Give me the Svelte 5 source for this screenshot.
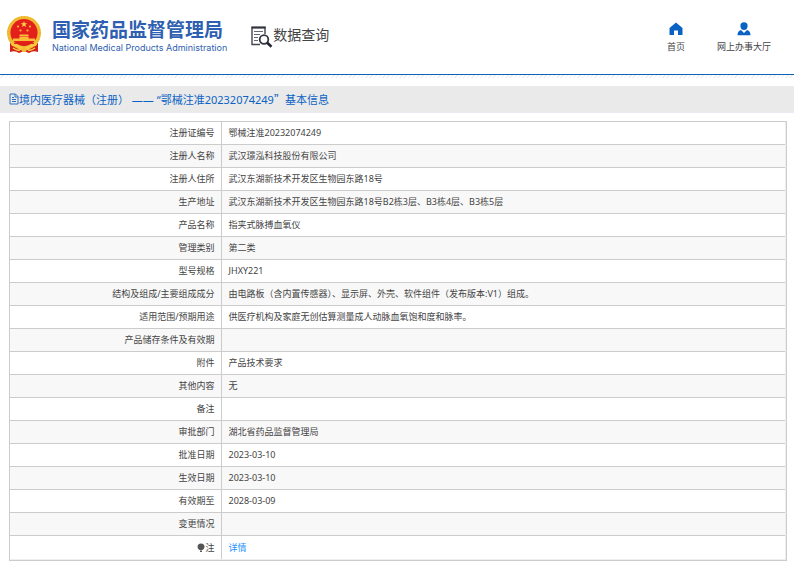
<script>
    const rows = [
        { label: '注册证编号', value: '鄂械注准20232074249' },
        { label: '注册人名称', value: '武汉璟泓科技股份有限公司' },
        { label: '注册人住所', value: '武汉东湖新技术开发区生物园东路18号' },
        { label: '生产地址', value: '武汉东湖新技术开发区生物园东路18号B2栋3层、B3栋4层、B3栋5层' },
        { label: '产品名称', value: '指夹式脉搏血氧仪' },
        { label: '管理类别', value: '第二类' },
        { label: '型号规格', value: 'JHXY221' },
        { label: '结构及组成/主要组成成分', value: '由电路板（含内置传感器）、显示屏、外壳、软件组件（发布版本:V1）组成。' },
        { label: '适用范围/预期用途', value: '供医疗机构及家庭无创估算测量成人动脉血氧饱和度和脉率。' },
        { label: '产品储存条件及有效期', value: '' },
        { label: '附件', value: '产品技术要求' },
        { label: '其他内容', value: '无' },
        { label: '备注', value: '' },
        { label: '审批部门', value: '湖北省药品监督管理局' },
        { label: '批准日期', value: '2023-03-10' },
        { label: '生效日期', value: '2023-03-10' },
        { label: '有效期至', value: '2028-03-09' },
        { label: '变更情况', value: '' }
    ];
</script>

<header>
    <a class="brand" href="#home">
        <svg class="emblem" viewBox="0 0 36 38" aria-hidden="true">
            <path d="M4 26 L4 36 Q9 34 13 37 L18 35 L23 37 Q27 34 32 36 L32 26Z" fill="#d81e18" />
            <circle cx="18" cy="17" r="17" fill="#f2bd32" />
            <circle cx="18" cy="17" r="16" fill="none" stroke="#e2a828" stroke-width="1" stroke-dasharray="1 2" />
            <circle cx="18" cy="16.5" r="13.6" fill="#e3201b" />
            <path d="M18 5 L18.8 7.3 L21.2 7.3 L19.3 8.8 L20 11 L18 9.7 L16 11 L16.7 8.8 L14.8 7.3 L17.2 7.3Z" fill="#fbd544" />
            <g fill="#f9bd38">
                <circle cx="12" cy="10.5" r="1.1" />
                <circle cx="24" cy="10.5" r="1.1" />
                <circle cx="14.5" cy="14.5" r="1.1" />
                <circle cx="21.5" cy="14.5" r="1.1" />
                <path d="M13 20 L14 18.6 H22 L23 20Z M13.5 20.6 H22.5 V22.5 H29 V25 H7 V22.5 H13.5Z" />
            </g>
            <path d="M4 26 Q11 27 14 30 L18 32 L22 30 Q25 27 32 26 L30 30 Q25 30 22 34 H14 Q11 30 6 30Z" fill="#f7c840" />
            <path d="M8 27.5 Q14 26 18 29.5 Q22 26 28 27.5" fill="none" stroke="#d81e18" stroke-width="1.2" />
            <circle cx="18" cy="33.5" r="2.6" fill="#f2bd32" />
            <path d="M7 32 Q11 35 14 34 M29 32 Q25 35 22 34" fill="none" stroke="#f7ce4a" stroke-width="1.4" />
        </svg>
        <span class="names">
            <span class="cn">国家药品监督管理局</span>
            <span class="en">National Medical Products Administration</span>
        </span>
    </a>
    <div class="section">
        <svg viewBox="0 0 22 22" aria-hidden="true">
            <path d="M14 8 V1.5 H1 V18.5 H9" fill="none" stroke="#444552" stroke-width="1.4" />
            <path d="M0.5 1.5 H14.7" stroke="#343542" stroke-width="2" />
            <path d="M3 5.5 H12 M3 8.5 H9 M3 11.5 H7 M3 14.5 H7" stroke="#666772" stroke-width="1.2" />
            <circle cx="13" cy="13.5" r="4.3" fill="#fff" stroke="#343542" stroke-width="1.8" />
            <path d="M16.2 16.8 L20.5 20.8" stroke="#242532" stroke-width="2.6" />
        </svg>
        <span>数据查询</span>
    </div>
    <nav>
        <a href="#index">
            <svg viewBox="0 0 14 14" aria-hidden="true">
                <path d="M7 0.5 L13.5 6 V13 H9 V8.5 H5 V13 H0.5 V6Z" fill="#0a62c4" />
            </svg>
            首页
        </a>
        <a href="#hall">
            <svg viewBox="0 0 14 14" aria-hidden="true">
                <path d="M7 0.3 A3.6 3.6 0 0 1 10.6 4 Q10.4 7.8 7 8 Q3.6 7.8 3.4 4 A3.6 3.6 0 0 1 7 0.3Z M4 8 L7 11 L10 8 Q13.5 9 13.5 13.2 H0.5 Q0.5 9 4 8Z" fill="#0a62c4" />
            </svg>
            网上办事大厅
        </a>
    </nav>
</header>

<main>
    <h1>
        <svg viewBox="0 0 10 12" aria-hidden="true">
            <path d="M1 1 H6.5 L9 3.5 V11 H1Z M6 1 V4 H9 M3 4.5 H5 M3 6.5 H7 M3 8.5 H7" fill="none" stroke="#2c6fc0" />
        </svg>
        <span>境内医疗器械（注册） —— “鄂械注准20232074249<span class="quote">”</span>基本信息</span>
    </h1>

    <div class="table-box">
        <table>
            <tbody>
                {#each rows as row}
                    <tr>
                        <th scope="row">{row.label}</th>
                        <td>{row.value}</td>
                    </tr>
                {/each}
                <tr>
                    <th scope="row">
                        <svg class="bulb" viewBox="0 0 8 10" aria-hidden="true">
                            <path d="M4 0.5 A3.5 3.5 0 0 1 7.5 4 Q7.3 5.8 5.5 7 H2.5 Q0.7 5.8 0.5 4 A3.5 3.5 0 0 1 4 0.5Z M3 7.5 H5 V9 H3Z" fill="#555" />
                        </svg>注
                    </th>
                    <td><a href="#detail">详情</a></td>
                </tr>
            </tbody>
        </table>
    </div>
</main>

<style>
    :global(body) {
        background: #fff;
        color: #444;
        font-family: 'Noto Sans', 'Noto Sans CJK SC', sans-serif;
        font-size: 9px;
    }
    a {
        text-decoration: none;
    }
    header {
        display: flex;
        align-items: center;
        box-sizing: border-box;
        height: 75px;
        padding: 0 23px 4px 6px;
        border-bottom: 1px solid #0a62b8;
    }
    .brand {
        display: flex;
        align-items: center;
        gap: 10px;
        color: #2f5fb0;
    }
    .emblem {
        width: 36px;
        height: 38px;
    }
    .names {
        display: flex;
        flex-direction: column;
        padding-top: 4px;
    }
    .cn {
        font-size: 19px;
        font-weight: 700;
        line-height: 22px;
    }
    .en {
        font-family: Inter, 'Liberation Sans', sans-serif;
        font-size: 9px;
        line-height: 14px;
        white-space: nowrap;
    }
    .section {
        display: flex;
        align-items: flex-start;
        margin-left: 24px;
        padding-top: 4px;
        color: #444;
        font-size: 14px;
        line-height: 18px;
    }
    .section svg {
        width: 22px;
        height: 22px;
    }
    nav {
        display: flex;
        gap: 32px;
        margin-left: auto;
        padding-top: 6px;
    }
    nav a {
        display: flex;
        flex-direction: column;
        align-items: center;
        gap: 4px;
        color: #444;
        line-height: 14px;
    }
    nav svg {
        width: 14px;
        height: 14px;
    }
    /* thin hatched strip under the header line */
    main::before {
        content: '';
        display: block;
        height: 3px;
        margin-bottom: 8px;
        background: repeating-linear-gradient(135deg, #fff 0 2px, #eee 2px 3px);
    }
    h1 {
        display: flex;
        align-items: center;
        box-sizing: border-box;
        height: 27px;
        margin: 0;
        padding: 0 9px;
        border-bottom: 1px solid #e8ebf4;
        background: #eaeaea;
        color: #0a62c4;
        font-size: 11px;
        font-weight: 400;
        line-height: 26px;
    }
    h1 svg {
        width: 10px;
        height: 12px;
    }
    .quote {
        font-family: 'Noto Sans CJK SC', sans-serif;
    }
    .table-box {
        margin: 8px 7px 8px 9px;
        padding: 0 1px 1px 0;
        border: 1px solid #ccc;
        background: #eee;
    }
    table {
        width: 100%;
        border-collapse: collapse;
        table-layout: fixed;
        background: #fff;
    }
    tr:nth-child(even) {
        background: #f8f8f8;
    }
    tr + tr {
        border-top: 1px solid #ccc;
    }
    th,
    td {
        height: 22px;
        padding: 0 7px;
        line-height: 14px;
        font-weight: 400;
    }
    tr:last-child td {
        height: 23px;
    }
    th {
        box-sizing: border-box;
        width: 211px;
        padding-right: 6px;
        border-right: 1px solid #ccc;
        text-align: right;
    }
    td {
        text-align: left;
    }
    td a {
        color: #1e90ff;
    }
    .bulb {
        width: 8px;
        height: 10px;
        vertical-align: -2px;
    }
</style>
